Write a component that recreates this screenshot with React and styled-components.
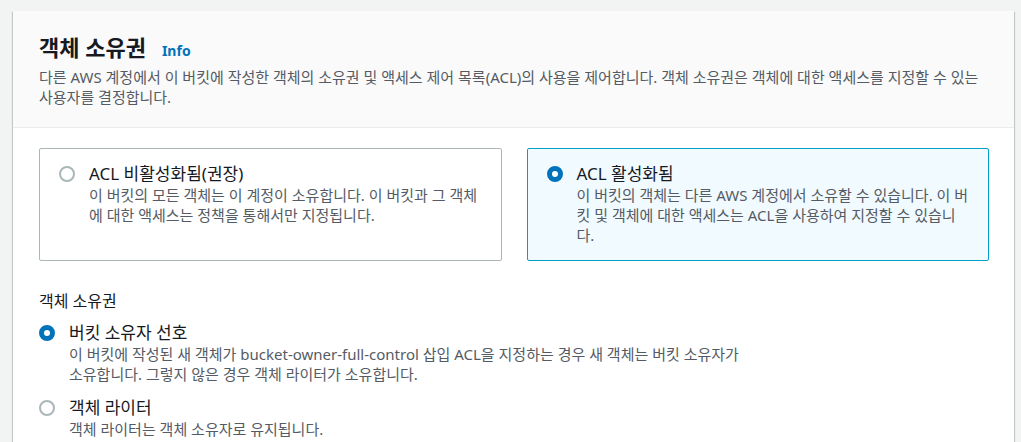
import React from "react"
import styled, { createGlobalStyle } from "styled-components"

const GlobalStyle = createGlobalStyle`
  html, body {
    margin: 0;
    padding: 0;
    background: #f2f3f3;
  }
  body {
    font-family: "Noto Sans", "Noto Sans CJK KR", sans-serif;
    color: #16191f;
  }
`

const Page = styled.div`
  padding: 11px 7px 0 13px;
  height: 442px;
  box-sizing: border-box;
  overflow: hidden;
`

const Card = styled.section`
  background: #fff;
  box-shadow: 0 1px 1px 0 rgba(0, 28, 36, 0.3), 1px 1px 1px 0 rgba(0, 28, 36, 0.15),
    -1px 1px 1px 0 rgba(0, 28, 36, 0.15);
  min-height: 460px;
`

const CardHeader = styled.header`
  background: #fafafa;
  border-bottom: 1px solid #eaeded;
  padding: 22px 25px 20px 26px;
`

const TitleRow = styled.div`
  display: flex;
  align-items: baseline;
  gap: 16px;
  margin-bottom: 6px;
`

const Title = styled.h2`
  margin: 0;
  font-size: 22px;
  line-height: 28px;
  font-weight: 700;
  color: #16191f;
`

const InfoLink = styled.a`
  font-size: 14px;
  font-weight: 700;
  color: #0073bb;
  text-decoration: none;
`

const Description = styled.p`
  margin: 0;
  font-size: 15px;
  line-height: 20px;
  color: #545b64;
`

const CardBody = styled.div`
  padding: 20px 25px 0 26px;
`

const TileGrid = styled.div`
  display: grid;
  grid-template-columns: 1fr 1fr;
  gap: 25px;
  margin-bottom: 29px;
`

const Tile = styled.label`
  display: flex;
  gap: 14px;
  padding: 14px 15px 15px 19px;
  border: 1px solid ${(p) => (p.$checked ? "#00a1c9" : "#aab7b8")};
  background: ${(p) => (p.$checked ? "#f1faff" : "#fff")};
  border-radius: 2px;
  cursor: pointer;
`

const Radio = styled.span`
  flex: none;
  box-sizing: border-box;
  width: 16px;
  height: 16px;
  margin-top: 3px;
  border-radius: 50%;
  background: #fff;
  border: ${(p) => (p.$checked ? "5px solid #0073bb" : "2px solid #aab7b8")};
`

const OptionText = styled.div`
  display: flex;
  flex-direction: column;
`

const OptionLabel = styled.span`
  font-size: 17px;
  line-height: 22px;
  color: #16191f;
`

const OptionDesc = styled.span`
  font-size: 15px;
  line-height: 20px;
  color: #545b64;
`

const FieldLabel = styled.div`
  font-size: 16px;
  line-height: 22px;
  color: #16191f;
  margin-bottom: 10px;
`

const RadioList = styled.div`
  display: flex;
  flex-direction: column;
  gap: 13px;
`

const RadioItem = styled.label`
  display: flex;
  gap: 14px;
  max-width: 710px;
  cursor: pointer;
`

const tiles = [
  {
    label: "ACL 비활성화됨(권장)",
    desc: "이 버킷의 모든 객체는 이 계정이 소유합니다. 이 버킷과 그 객체에 대한 액세스는 정책을 통해서만 지정됩니다.",
    checked: false,
  },
  {
    label: "ACL 활성화됨",
    desc: "이 버킷의 객체는 다른 AWS 계정에서 소유할 수 있습니다. 이 버킷 및 객체에 대한 액세스는 ACL을 사용하여 지정할 수 있습니다.",
    checked: true,
  },
]

const owners = [
  {
    label: "버킷 소유자 선호",
    desc: "이 버킷에 작성된 새 객체가 bucket-owner-full-control 삽입 ACL을 지정하는 경우 새 객체는 버킷 소유자가 소유합니다. 그렇지 않은 경우 객체 라이터가 소유합니다.",
    checked: true,
  },
  {
    label: "객체 라이터",
    desc: "객체 라이터는 객체 소유자로 유지됩니다.",
    checked: false,
  },
]

const App = () => {
  return (
    <Page>
      <GlobalStyle />
      <Card>
        <CardHeader>
          <TitleRow>
            <Title>객체 소유권</Title>
            <InfoLink href="#">Info</InfoLink>
          </TitleRow>
          <Description>
            다른 AWS 계정에서 이 버킷에 작성한 객체의 소유권 및 액세스 제어 목록(ACL)의 사용을 제어합니다. 객체 소유권은 객체에 대한 액세스를 지정할 수 있는 사용자를 결정합니다.
          </Description>
        </CardHeader>
        <CardBody>
          <TileGrid>
            {tiles.map((t) => (
              <Tile key={t.label} $checked={t.checked}>
                <Radio $checked={t.checked} />
                <OptionText>
                  <OptionLabel>{t.label}</OptionLabel>
                  <OptionDesc>{t.desc}</OptionDesc>
                </OptionText>
              </Tile>
            ))}
          </TileGrid>
          <FieldLabel>객체 소유권</FieldLabel>
          <RadioList>
            {owners.map((o) => (
              <RadioItem key={o.label}>
                <Radio $checked={o.checked} />
                <OptionText>
                  <OptionLabel>{o.label}</OptionLabel>
                  <OptionDesc>{o.desc}</OptionDesc>
                </OptionText>
              </RadioItem>
            ))}
          </RadioList>
        </CardBody>
      </Card>
    </Page>
  )
}

export default App
